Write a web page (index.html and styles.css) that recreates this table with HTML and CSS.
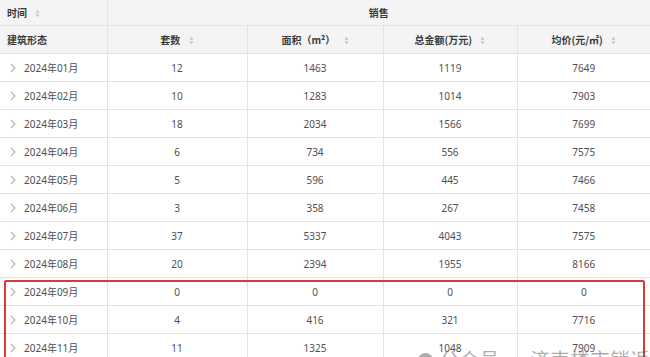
FILE: index.html
```html
<!DOCTYPE html>
<html lang="zh">
<head>
<meta charset="utf-8">
<link rel="stylesheet" href="styles.css">
</head>
<body>
<div class="wrap">
<table class="grid">
  <colgroup>
    <col class="c1"><col class="c2"><col class="c3"><col class="c4"><col class="c5">
  </colgroup>
  <thead>
    <tr class="h1">
      <th class="left">时间 <svg class="sort" viewBox="0 0 6 10"><path d="M3 0.5L5.5 4H0.5Z M3 9.5L5.5 6H0.5Z"/></svg></th>
      <th colspan="4">销售</th>
    </tr>
    <tr class="h2">
      <th class="left">建筑形态</th>
      <th>套数 <svg class="sort" viewBox="0 0 6 10"><path d="M3 0.5L5.5 4H0.5Z M3 9.5L5.5 6H0.5Z"/></svg></th>
      <th>面积（m²） <svg class="sort" viewBox="0 0 6 10"><path d="M3 0.5L5.5 4H0.5Z M3 9.5L5.5 6H0.5Z"/></svg></th>
      <th>总金额(万元) <svg class="sort" viewBox="0 0 6 10"><path d="M3 0.5L5.5 4H0.5Z M3 9.5L5.5 6H0.5Z"/></svg></th>
      <th>均价(元/㎡) <svg class="sort" viewBox="0 0 6 10"><path d="M3 0.5L5.5 4H0.5Z M3 9.5L5.5 6H0.5Z"/></svg></th>
    </tr>
  </thead>
  <tbody>
    <tr><td class="left"><span class="chev"><svg viewBox="0 0 6 10"><path d="M1 1L5 5L1 9"/></svg></span>2024年01月</td><td>12</td><td>1463</td><td>1119</td><td>7649</td></tr>
    <tr><td class="left"><span class="chev"><svg viewBox="0 0 6 10"><path d="M1 1L5 5L1 9"/></svg></span>2024年02月</td><td>10</td><td>1283</td><td>1014</td><td>7903</td></tr>
    <tr><td class="left"><span class="chev"><svg viewBox="0 0 6 10"><path d="M1 1L5 5L1 9"/></svg></span>2024年03月</td><td>18</td><td>2034</td><td>1566</td><td>7699</td></tr>
    <tr><td class="left"><span class="chev"><svg viewBox="0 0 6 10"><path d="M1 1L5 5L1 9"/></svg></span>2024年04月</td><td>6</td><td>734</td><td>556</td><td>7575</td></tr>
    <tr><td class="left"><span class="chev"><svg viewBox="0 0 6 10"><path d="M1 1L5 5L1 9"/></svg></span>2024年05月</td><td>5</td><td>596</td><td>445</td><td>7466</td></tr>
    <tr><td class="left"><span class="chev"><svg viewBox="0 0 6 10"><path d="M1 1L5 5L1 9"/></svg></span>2024年06月</td><td>3</td><td>358</td><td>267</td><td>7458</td></tr>
    <tr><td class="left"><span class="chev"><svg viewBox="0 0 6 10"><path d="M1 1L5 5L1 9"/></svg></span>2024年07月</td><td>37</td><td>5337</td><td>4043</td><td>7575</td></tr>
    <tr><td class="left"><span class="chev"><svg viewBox="0 0 6 10"><path d="M1 1L5 5L1 9"/></svg></span>2024年08月</td><td>20</td><td>2394</td><td>1955</td><td>8166</td></tr>
    <tr><td class="left"><span class="chev"><svg viewBox="0 0 6 10"><path d="M1 1L5 5L1 9"/></svg></span>2024年09月</td><td>0</td><td>0</td><td>0</td><td>0</td></tr>
    <tr><td class="left"><span class="chev"><svg viewBox="0 0 6 10"><path d="M1 1L5 5L1 9"/></svg></span>2024年10月</td><td>4</td><td>416</td><td>321</td><td>7716</td></tr>
    <tr><td class="left"><span class="chev"><svg viewBox="0 0 6 10"><path d="M1 1L5 5L1 9"/></svg></span>2024年11月</td><td>11</td><td>1325</td><td>1048</td><td>7909</td></tr>
  </tbody>
</table>
<div class="highlight"></div>
<div class="watermark"><span class="wm-icon"></span>公众号 · 济南楼市销返</div>
</div>
</body>
</html>
```
FILE: styles.css
```css
html, body {
  margin: 0;
  padding: 0;
  background: #ffffff;
}
body {
  width: 650px;
  height: 357px;
  overflow: hidden;
  font-family: "Noto Sans", "Noto Sans CJK SC", sans-serif;
  font-size: 10px;
  color: #444;
}
.wrap {
  position: relative;
  width: 650px;
  height: 357px;
  overflow: hidden;
}
.grid {
  width: 650px;
  border-collapse: collapse;
  table-layout: fixed;
}
.c1 { width: 107px; }
.c2 { width: 140px; }
.c3 { width: 136px; }
.c4 { width: 134px; }
.c5 { width: 133px; }
.grid th, .grid td {
  border: 1px solid #e4e4e4;
  padding: 0;
  text-align: center;
  white-space: nowrap;
  line-height: 14px;
}
.grid tr > :first-child { border-left: none; }
.grid tr > :last-child { border-right: none; }
.grid thead tr:first-child th { border-top: none; }
.grid th {
  background: #f4f4f4;
  font-weight: 700;
  color: #3a3a3a;
  font-family: "Noto Sans CJK SC", "Noto Sans", sans-serif;
}
.h1 th { height: 25px; }
.h2 th { height: 27px; }
.grid td { height: 27px; color: #505050; }
.grid .left {
  text-align: left;
  padding-left: 7px;
}
.grid td.left {
  padding-left: 10px;
}
.sort {
  width: 5px;
  height: 9px;
  margin-left: 6px;
  vertical-align: -1px;
  fill: #c6c6c6;
}
.chev {
  display: inline-block;
  width: 6px;
  height: 10px;
  margin-right: 8px;
  vertical-align: -1px;
}
.chev svg {
  width: 6px;
  height: 10px;
  fill: none;
  stroke: #b4b4b4;
  stroke-width: 1.1;
  display: block;
}
.highlight {
  position: absolute;
  left: 4px;
  top: 280px;
  width: 637px;
  height: 100px;
  border: 2px solid #d8393b;
  border-radius: 2px;
}
.watermark {
  position: absolute;
  left: 418px;
  top: 347px;
  font-family: "Noto Sans CJK SC", sans-serif;
  font-size: 19px;
  line-height: 24px;
  color: rgba(90, 90, 90, 0.5);
  white-space: nowrap;
  letter-spacing: 1px;
}
.wm-icon {
  display: inline-block;
  width: 15px;
  height: 15px;
  border-radius: 50%;
  background: rgba(90, 90, 90, 0.5);
  margin-right: 7px;
  vertical-align: -1px;
}
```
